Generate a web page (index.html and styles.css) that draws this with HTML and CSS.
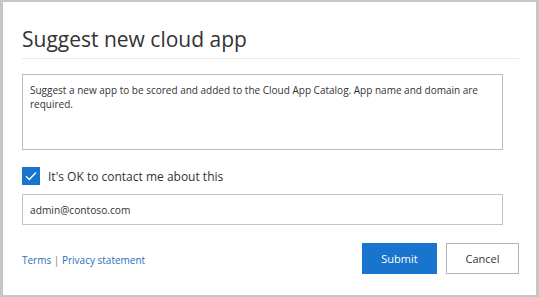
FILE: index.html
```html
<!DOCTYPE html>
<html lang="en">
  <head>
    <meta charset="UTF-8" />
    <title>Suggest new cloud app</title>
    <link rel="stylesheet" href="styles.css">
  </head>
  <body>
    <div class="dialog">
      <div class="header">
        <h1>Suggest new cloud app</h1>
      </div>

      <textarea class="desc" readonly>Suggest a new app to be scored and added to the Cloud App Catalog. App name and domain are required.</textarea>

      <label class="check">
        <span class="box">
          <svg width="12" height="10" viewBox="0 0 12 10">
            <path d="M1 5.2 L4.3 8.4 L11 1.6" fill="none" stroke="#fff" stroke-width="1.4" />
          </svg>
        </span>
        It's OK to contact me about this
      </label>

      <input class="email" type="text" value="admin@contoso.com" />

      <div class="footer">
        <div class="links">
          <a href="#">Terms</a> <span class="sep">|</span> <a href="#">Privacy statement</a>
        </div>
        <div class="buttons">
          <button class="btn primary">Submit</button>
          <button class="btn">Cancel</button>
        </div>
      </div>
    </div>
  </body>
</html>
```

FILE: styles.css
```css
body {
  margin: 0;
  font-family: "Open Sans", sans-serif;
  color: #333;
}

.dialog {
  box-sizing: border-box;
  width: 539px;
  height: 297px;
  background: #fff;
  border: solid #c6c6c6;
  border-width: 2px 3px 2px 3px;
  padding: 0 17px 0 19px;
}

.header {
  padding: 23px 0 5px;
  border-bottom: 1px solid #eaeaea;
}

h1 {
  margin: 0;
  font-size: 21px;
  line-height: 28px;
  font-weight: 400;
  color: #333;
}

.desc {
  display: block;
  box-sizing: border-box;
  width: 481px;
  height: 76px;
  margin: 15px 0 0;
  padding: 8px 7px;
  border: 1px solid #bdbdbd;
  border-radius: 0;
  font-family: "Open Sans", sans-serif;
  font-size: 10px;
  line-height: 14px;
  color: #333;
  resize: none;
  overflow: hidden;
  outline: none;
}

.check {
  display: flex;
  align-items: center;
  gap: 8px;
  margin-top: 17px;
  font-size: 12px;
  color: #333;
}

.box {
  display: flex;
  align-items: center;
  justify-content: center;
  width: 18px;
  height: 18px;
  background: #1874cc;
}

.email {
  display: block;
  box-sizing: border-box;
  width: 481px;
  height: 31px;
  margin-top: 9px;
  padding: 0 7px;
  border: 1px solid #c4c4c4;
  font-family: "Open Sans", sans-serif;
  font-size: 10.2px;
  color: #333;
  outline: none;
}

.footer {
  display: flex;
  justify-content: space-between;
  align-items: center;
  margin-top: 18px;
}

.links {
  font-size: 10px;
  padding-top: 2px;
}

.links a {
  color: #2a6ebb;
  text-decoration: none;
}

.sep {
  color: #8a7a5a;
}

.buttons {
  display: flex;
  gap: 9px;
}

.btn {
  box-sizing: border-box;
  width: 73px;
  height: 31px;
  border: 1px solid #b5b5b5;
  background: #fff;
  font-family: "Open Sans", sans-serif;
  font-size: 11px;
  color: #333;
  padding: 0;
}

.btn.primary {
  width: 75px;
  background: #1874cc;
  border-color: #1874cc;
  color: #fff;
}
```
